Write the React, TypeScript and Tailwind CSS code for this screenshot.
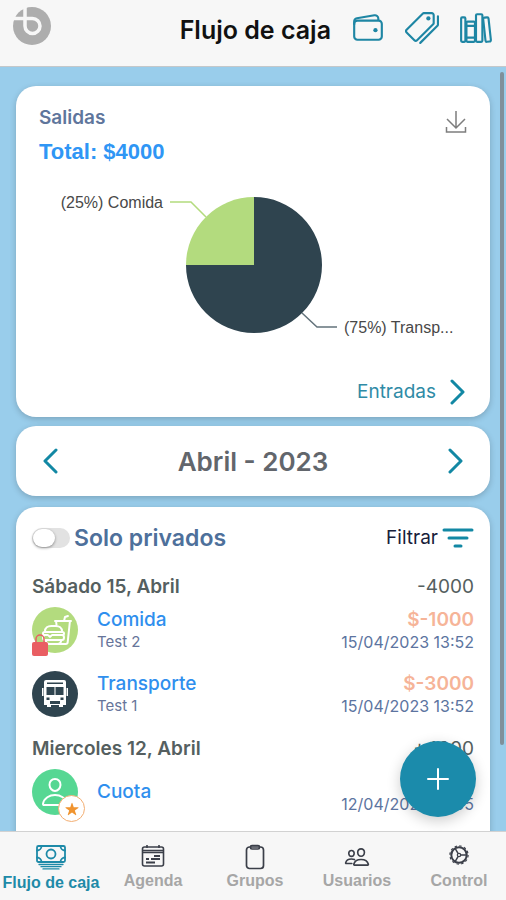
import type { ReactNode } from "react";
import {
  IoWalletOutline,
  IoPricetagsOutline,
  IoLibraryOutline,
  IoPeopleOutline,
  IoFastFoodOutline,
  IoPersonOutline,
  IoStar,
} from "react-icons/io5";

function Logo() {
  return (
    <svg viewBox="0 0 38 38" className="size-[38px]" aria-hidden="true">
      <circle cx="19" cy="19" r="19" fill="#adadad" />
      <path d="M12 0V19a7.500 7.500 0 1 0 7.500-7.500H0" fill="none" stroke="#f7f7f7" strokeWidth="3.500" />
    </svg>
  );
}

function Chevron({ left = false }: { left?: boolean }) {
  return (
    <svg viewBox="0 0 16 26" className="h-[26px] w-4" fill="none" stroke="#1288a4" strokeWidth="3" strokeLinecap="round" strokeLinejoin="round" aria-hidden="true">
      <path d={left ? "M14 2 3 13l11 11" : "M2 2l11 11L2 24"} />
    </svg>
  );
}

function DownloadIcon() {
  return (
    <svg viewBox="0 0 22 24" className="h-6 w-[22px]" fill="none" stroke="#7d7d7d" strokeWidth="1.500" aria-hidden="true">
      <path d="M11 1v17M2 9l9 9 9-9M1.500 17v5h19v-5" />
    </svg>
  );
}

function BusIcon() {
  return (
    <svg viewBox="0 0 26 30" className="h-[30px] w-[26px]" aria-hidden="true">
      <path fill="#fff" d="M4 1h18a2 2 0 0 1 2 2v23h-3v2h-4v-2H9v2H5v-2H2V3a2 2 0 0 1 2-2ZM0 9h1.500v8H0zM24.500 9H26v8h-1.500z" />
      <path fill="#2f444f" d="M5 3.500h16V5H5zM4.500 8h8v8h-8zM13.500 8h8v8h-8zM8 22h10v3H8z" />
      <path fill="#2f444f" d="M4.500 18.500h3v2.500h-3zM18.500 18.500h3v2.500h-3z" />
    </svg>
  );
}

function CashIcon() {
  return (
    <svg viewBox="0 0 30 26" className="h-[26px] w-[30px]" fill="none" stroke="currentColor" strokeWidth="1.800" strokeLinecap="round" aria-hidden="true">
      <rect x="1" y="2" width="28" height="16" rx="1.500" />
      <circle cx="15" cy="10" r="4.500" />
      <path d="M1 6.500a4.500 4.500 0 0 0 4.500-4.500M29 6.500A4.500 4.500 0 0 1 24.500 2M1 13.500A4.500 4.500 0 0 1 5.500 18M29 13.500a4.500 4.500 0 0 0-4.500 4.500" />
      <path d="M3 20.500h24M5 22.700h20M7 24.900h16" strokeWidth="1.300" />
    </svg>
  );
}

function CalendarIcon() {
  return (
    <svg viewBox="0 0 24 24" className="size-6" fill="none" stroke="currentColor" strokeWidth="1.600" aria-hidden="true">
      <rect x="1.500" y="3" width="21" height="19" rx="2" />
      <path d="M1.500 6.500h21M1.500 8.500h21M6 1v3M18 1v3" />
      <path d="M13 12h6M10 15h9M5 18.500h9M5 15h3" strokeWidth="1.800" />
    </svg>
  );
}

function ClipboardIcon() {
  return (
    <svg viewBox="0 0 20 26" className="h-[26px] w-5" fill="none" stroke="currentColor" strokeWidth="1.700" strokeLinejoin="round" aria-hidden="true">
      <rect x="1.500" y="3" width="17" height="21.500" rx="3" />
      <rect x="5.500" y="1.500" width="9" height="3.500" rx="1.500" />
    </svg>
  );
}

function ControlIcon() {
  return (
    <svg viewBox="0 0 22 22" className="size-[22px]" fill="none" stroke="currentColor" aria-hidden="true">
      <circle cx="11" cy="11" r="9.100" strokeWidth="1.200" strokeDasharray="2.400 2.365" />
      <circle cx="11" cy="11" r="7.700" strokeWidth="2" />
      <circle cx="11" cy="11" r="1.700" strokeWidth="1.200" />
      <path d="M13 11h6M10 9.300 7 4.200M10 12.700 7 17.800" strokeWidth="1.500" />
    </svg>
  );
}

function LockIcon() {
  return (
    <svg viewBox="0 0 16 22" className="absolute -bottom-[3px] left-0 h-[22px] w-4" aria-hidden="true">
      <path d="M4 10V5a4 4 0 0 1 8 0v5" fill="none" stroke="#e95e62" strokeWidth="1.500" />
      <rect y="8" width="16" height="14" rx="2" fill="#e95e62" />
    </svg>
  );
}

function PieChart() {
  return (
    <svg viewBox="0 0 474 200" className="w-full font-['Liberation_Sans',Arial,sans-serif] text-[16px]" role="img" aria-label="Salidas por categoría">
      <path d="M238 95V27a68 68 0 1 1-68 68Z" fill="#2f444f" />
      <path d="M238 95V27a68 68 0 0 0-68 68Z" fill="#b3db7e" />
      <path d="M154 32h21l15 15" fill="none" stroke="#b3db7e" strokeWidth="1.500" />
      <path d="M286 143l15 14h20" fill="none" stroke="#63737b" strokeWidth="1.500" />
      <text x="147" y="38" textAnchor="end" fill="#484848">(25%) Comida</text>
      <text x="328" y="163" fill="#484848">(75%) Transp...</text>
    </svg>
  );
}

function DayGroup({ day, total, children }: { day: string; total: string; children: ReactNode }) {
  return (
    <section className="pt-3">
      <div className="flex h-[22px] items-center justify-between text-[19px] text-[#555f60]">
        <h3 className="font-semibold">{day}</h3>
        <span>{total}</span>
      </div>
      {children}
    </section>
  );
}

type EntryProps = {
  icon: ReactNode;
  name: string;
  note?: string;
  amount?: string;
  date: string;
};

function Entry({ icon, name, note, amount, date }: EntryProps) {
  return (
    <div className="flex h-16 items-center">
      {icon}
      <div className="ml-[19px] flex-1">
        <div className="text-[19px] leading-6 font-medium text-[#2f8fee]">{name}</div>
        {note && <div className="text-[15px] leading-5 text-[#67759a]">{note}</div>}
      </div>
      <div className="text-right">
        <div className="h-6 text-[19px] leading-6 font-semibold text-[#f6b498]">{amount}</div>
        <div className="text-[16px] leading-5 text-[#5c74a0]">{date}</div>
      </div>
    </div>
  );
}

function Tab({ icon, label, active = false }: { icon: ReactNode; label: string; active?: boolean }) {
  return (
    <a
      href="#"
      aria-current={active ? "page" : undefined}
      className={`flex flex-1 flex-col items-center pt-3 font-['Liberation_Sans',Arial,sans-serif] text-[16px] leading-5 font-bold whitespace-nowrap ${active ? "text-[#1e8aa8]" : "text-[#a6a6a6]"}`}
    >
      <span className={`flex items-start ${active ? "h-[29px]" : "h-[27px] text-[#3b3f49]"}`}>{icon}</span>
      {label}
    </a>
  );
}

export default function App() {
  return (
    <div className="flex h-screen flex-col overflow-hidden bg-[#99cdeb] font-[Inter,sans-serif]">
      <header className="flex h-[67px] shrink-0 items-start border-b border-[#c4c8ca] bg-[#f7f7f7] px-[13px] text-[#1e86a4]">
        <div className="pt-[7px]">
          <Logo />
        </div>
        <h1 className="ml-auto pt-3 text-[25px] leading-9 font-semibold text-[#111]">Flujo de caja</h1>
        <nav className="ml-5 flex gap-5 pt-[11px]">
          <button type="button" aria-label="Cartera"><IoWalletOutline className="size-[34px]" /></button>
          <button type="button" aria-label="Etiquetas"><IoPricetagsOutline className="size-[34px]" /></button>
          <button type="button" aria-label="Biblioteca"><IoLibraryOutline className="size-[34px]" /></button>
        </nav>
      </header>

      <div className="relative min-h-0 flex-1">
        <main className="flex h-full flex-col overflow-hidden px-4 pt-[19px]">
          <section className="shrink-0 rounded-[20px] bg-white pb-[9px] shadow-[0_2px_6px_rgba(0,0,0,0.2)]">
            <div className="flex justify-between px-[23px] pt-5">
              <div>
                <h2 className="text-[19px] leading-6 font-semibold text-[#5f769c]">Salidas</h2>
                <p className="mt-1 font-['Liberation_Sans',Arial,sans-serif] text-[22px] leading-9 font-bold text-[#2f96f5]">Total: $4000</p>
              </div>
              <button type="button" aria-label="Descargar" className="mt-1 self-start"><DownloadIcon /></button>
            </div>
            <PieChart />
            <button type="button" className="mt-[6px] mr-6 ml-auto flex h-8 items-center gap-[14px] text-[19px] text-[#2f8ba6]">
              Entradas
              <Chevron />
            </button>
          </section>

          <section className="mt-[9px] flex h-[70px] shrink-0 items-center justify-between rounded-[20px] bg-white px-[26px] shadow-[0_2px_6px_rgba(0,0,0,0.2)]">
            <button type="button" aria-label="Mes anterior"><Chevron left /></button>
            <h2 className="text-[26px] font-semibold text-[#62666c]">Abril - 2023</h2>
            <button type="button" aria-label="Mes siguiente"><Chevron /></button>
          </section>

          <section className="mt-[11px] shrink-0 rounded-t-[20px] bg-white px-4 pt-[15px] pb-8 shadow-[0_2px_6px_rgba(0,0,0,0.2)]">
            <div className="mb-[10px] flex h-8 items-center justify-between">
              <label className="flex items-center gap-1 text-[23px] font-semibold text-[#4e709b]">
                <input
                  type="checkbox"
                  role="switch"
                  className="h-5 w-[38px] appearance-none rounded-full bg-[#e2e2e2] p-px before:block before:h-[18px] before:w-[22px] before:rounded-full before:bg-white before:shadow-[0_1px_3px_rgba(0,0,0,0.4)] checked:before:ml-auto"
                />
                Solo privados
              </label>
              <button type="button" className="flex items-center gap-1 text-[19px] text-[#17203a]">
                Filtrar
                <svg viewBox="0 0 32 20" className="h-5 w-8" stroke="#1288a4" strokeWidth="3" strokeLinecap="round" aria-hidden="true">
                  <path d="M2 2h28M7 10h18M13 18h6" />
                </svg>
              </button>
            </div>

            <DayGroup day="Sábado 15, Abril" total="-4000">
              <Entry
                icon={
                  <span className="relative flex size-[46px] items-center justify-center rounded-full bg-[#b3db7e] text-white">
                    <IoFastFoodOutline className="ml-1 size-8" />
                    <LockIcon />
                  </span>
                }
                name="Comida"
                note="Test 2"
                amount="$-1000"
                date="15/04/2023 13:52"
              />
              <Entry
                icon={
                  <span className="flex size-[46px] items-center justify-center rounded-full bg-[#2f444f]">
                    <BusIcon />
                  </span>
                }
                name="Transporte"
                note="Test 1"
                amount="$-3000"
                date="15/04/2023 13:52"
              />
            </DayGroup>
            <DayGroup day="Miercoles 12, Abril" total="+4000">
              <Entry
                icon={
                  <span className="relative flex size-[46px] items-center justify-center rounded-full bg-[#56d793] text-white">
                    <IoPersonOutline className="size-8" />
                    <span className="absolute -right-[7px] -bottom-[7px] flex size-[27px] items-center justify-center rounded-full border border-[#f3ae72] bg-white text-[#f0942f]">
                      <IoStar className="size-[14px]" />
                    </span>
                  </span>
                }
                name="Cuota"
                date="12/04/2023 13:55"
              />
            </DayGroup>
          </section>
        </main>

        <div className="absolute top-[5px] right-[2px] h-[673px] w-1 rounded-full bg-[#7f909b]" />
        <button
          type="button"
          aria-label="Agregar"
          className="absolute right-[30px] bottom-[14px] flex size-[76px] items-center justify-center rounded-full bg-[#1b8bab] shadow-[0_4px_14px_rgba(0,0,0,0.2)]"
        >
          <svg viewBox="0 0 22 22" className="size-[22px]" stroke="#fff" strokeWidth="2" strokeLinecap="round" aria-hidden="true">
            <path d="M11 1v20M1 11h20" />
          </svg>
        </button>
      </div>

      <nav className="relative -mr-1 flex h-[69px] shrink-0 border-t border-[#d2d2d2] bg-[#f7f7f7]">
        <Tab active icon={<CashIcon />} label="Flujo de caja" />
        <Tab icon={<CalendarIcon />} label="Agenda" />
        <Tab icon={<ClipboardIcon />} label="Grupos" />
        <Tab icon={<IoPeopleOutline className="size-[26px]" />} label="Usuarios" />
        <Tab icon={<ControlIcon />} label="Control" />
      </nav>
    </div>
  );
}
